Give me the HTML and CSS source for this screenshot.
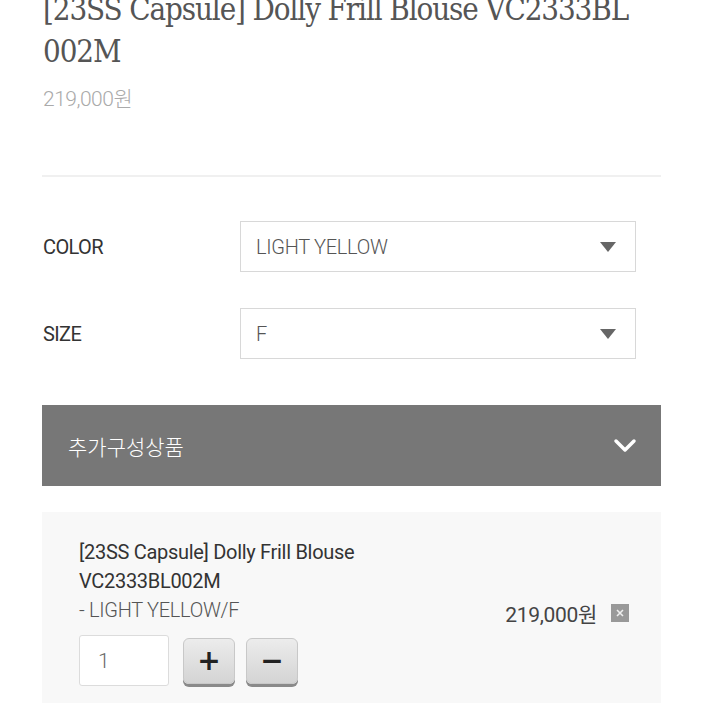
FILE: index.html
```html
<!DOCTYPE html>
<html lang="ko">
<head>
    <meta charset="UTF-8">
    <meta name="viewport" content="width=device-width, initial-scale=1.0">
    <title>Dolly Frill Blouse</title>
    <link rel="stylesheet" href="styles.css">
</head>
<body>
    <div class="page">
        <div class="head">
            <h1 class="title">[23SS Capsule] Dolly Frill Blouse VC2333BL<br>002M</h1>
            <div class="price">219,000원</div>
        </div>

        <div class="options">
            <div class="opt-row">
                <span class="opt-label">COLOR</span>
                <div class="select">
                    <span>LIGHT YELLOW</span>
                    <span class="arrow"></span>
                </div>
            </div>
            <div class="opt-row">
                <span class="opt-label">SIZE</span>
                <div class="select">
                    <span>F</span>
                    <span class="arrow"></span>
                </div>
            </div>
        </div>

        <div class="addon">
            <span>추가구성상품</span>
            <svg class="chev" width="24" height="16" viewBox="0 0 24 16">
                <path d="M3 3 L12 12 L21 3" fill="none" stroke="#fff" stroke-width="3.5" stroke-linecap="round" stroke-linejoin="round"/>
            </svg>
        </div>

        <div class="picked">
            <div class="picked-name">[23SS Capsule] Dolly Frill Blouse<br>VC2333BL002M</div>
            <div class="picked-line">
                <span class="picked-opt">- LIGHT YELLOW/F</span>
                <span class="picked-price">219,000원</span>
                <span class="del">
                    <svg width="10" height="10" viewBox="0 0 10 10">
                        <path d="M2 2 L8 8 M8 2 L2 8" stroke="#eee" stroke-width="1.6"/>
                    </svg>
                </span>
            </div>
            <div class="qty">
                <div class="qty-input">1</div>
                <button class="qty-btn">+</button>
                <button class="qty-btn">&minus;</button>
            </div>
        </div>
    </div>
</body>
</html>
```

FILE: styles.css
```css
body {
    margin: 0;
    background: #fff;
    font-family: Roboto, "Noto Sans CJK KR", sans-serif;
    color: #333;
}
.page {
    padding: 0 42px;
    width: 619px;
    overflow: hidden;
    height: 703px;
}
.head {
    margin-top: -12px;
    padding-left: 1px;
    padding-bottom: 63px;
    border-bottom: 2px solid #f0f0f0;
}
.title {
    margin: 0;
    font-family: "DejaVu Serif", serif;
    font-stretch: condensed;
    font-weight: normal;
    font-size: 31px;
    line-height: 42px;
    letter-spacing: -1.1px;
    color: #555;
    white-space: nowrap;
}
.price {
    margin-top: 10px;
    font-size: 21px;
    font-weight: 300;
    color: #aaa;
    letter-spacing: -0.5px;
}
.options {
    padding: 44px 25px 0 1px;
    display: flex;
    flex-direction: column;
    gap: 36px;
}
.opt-row {
    display: flex;
    align-items: center;
}
.opt-label {
    width: 197px;
    font-size: 20px;
    letter-spacing: -0.6px;
    color: #333;
}
.select {
    flex: 1;
    height: 49px;
    border: 1px solid #d8d8d8;
    display: flex;
    align-items: center;
    justify-content: space-between;
    padding: 0 19px 0 15px;
    font-size: 20px;
    font-weight: 300;
    letter-spacing: -0.3px;
    color: #555;
}
.arrow {
    width: 0;
    height: 0;
    border-left: 8px solid transparent;
    border-right: 8px solid transparent;
    border-top: 10px solid #666;
}
.addon {
    margin-top: 46px;
    height: 81px;
    background: #777;
    display: flex;
    align-items: center;
    justify-content: space-between;
    padding: 0 24px 0 26px;
    color: #fff;
    font-size: 21px;
    font-weight: 300;
}
.picked {
    margin-top: 26px;
    background: #f8f8f8;
    padding: 26px 32px 30px 37px;
    height: 200px;
}
.picked-name {
    font-size: 20px;
    line-height: 29px;
    letter-spacing: -0.3px;
    color: #333;
}
.picked-line {
    display: flex;
    align-items: center;
    font-size: 20px;
    letter-spacing: -0.3px;
}
.picked-opt {
    flex: 1;
    color: #555;
    font-weight: 300;
    line-height: 29px;
    align-self: flex-start;
}
.picked-price {
    font-size: 21px;
    color: #444;
    margin-top: 2px;
}
.del {
    margin: 2px 0 0 14px;
    width: 18px;
    height: 18px;
    background: #999;
    display: flex;
    align-items: center;
    justify-content: center;
}
.qty {
    display: flex;
    align-items: center;
    gap: 11px;
    margin-top: 7px;
}
.qty-input {
    width: 70px;
    height: 49px;
    border: 1px solid #dcdcdc;
    border-radius: 3px;
    background: #fff;
    padding-left: 18px;
    display: flex;
    align-items: center;
    font-size: 21px;
    font-weight: 300;
    color: #666;
    margin-right: 3px;
}
.qty-btn {
    width: 52px;
    height: 46px;
    border: 1px solid #c8c8c8;
    border-radius: 6px;
    background: linear-gradient(#ececec, #d4d4d4);
    box-shadow: 0 3px 0 #8a8a8a;
    font-family: "DejaVu Sans", sans-serif;
    font-size: 28px;
    font-weight: bold;
    color: #222;
    padding: 0;
}
```
